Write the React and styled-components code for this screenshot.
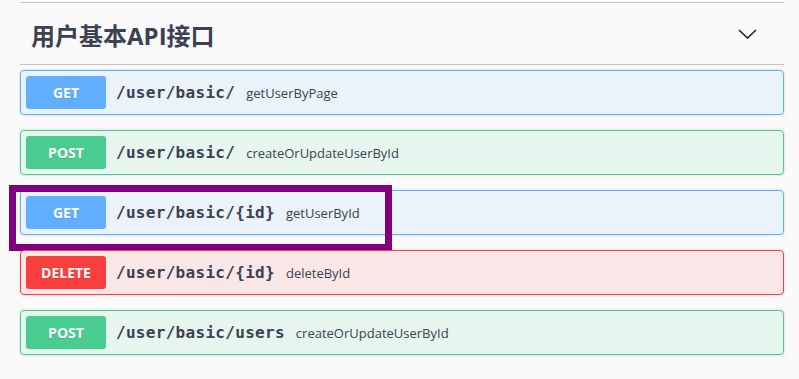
import React from 'react';
import styled, { createGlobalStyle } from 'styled-components';

// Global page styles

const GlobalStyle = createGlobalStyle`
  html, body {
    margin: 0;
    padding: 0;
    background: #fafafa;
  }
`;

const METHOD_COLORS = {
  GET: { main: '#61affe', bg: 'rgba(97, 175, 254, 0.1)' },
  POST: { main: '#49cc90', bg: 'rgba(73, 204, 144, 0.1)' },
  DELETE: { main: '#f93e3e', bg: 'rgba(249, 62, 62, 0.1)' },
};

// CSS Styled Components:

const Page = styled.div`
  padding: 2px 15px 0 20px;
`;

const Section = styled.div`
  border-top: 1px solid #c4c4c4;
`;

const TagHeader = styled.div`
  display: flex;
  align-items: center;
  justify-content: space-between;
  height: 61px;
  padding: 0 27px 0 11px;
  border-bottom: 1px solid #c4c4c4;
  margin-bottom: 5px;
`;

const TagTitle = styled.h3`
  margin: 4px 0 0 0;
  font-family: "Open Sans", "Noto Sans CJK SC", sans-serif;
  font-size: 24px;
  font-weight: 700;
  line-height: 30px;
  color: #3b4151;
`;

const Chevron = styled.svg`
  display: block;
  width: 19px;
  height: 10px;
`;

const OpBlock = styled.div`
  position: relative;
  margin-bottom: 15px;
  border: 1px solid ${(p) => METHOD_COLORS[p.method].main};
  border-radius: 4px;
  background: ${(p) => METHOD_COLORS[p.method].bg};
  box-shadow: 0 0 3px rgba(0, 0, 0, 0.19);
`;

const Summary = styled.div`
  display: flex;
  align-items: center;
  padding: 5px;
`;

const MethodBadge = styled.span`
  display: inline-block;
  box-sizing: border-box;
  min-width: 80px;
  height: 33px;
  line-height: 33px;
  text-align: center;
  border-radius: 3px;
  background: ${(p) => METHOD_COLORS[p.method].main};
  color: #fff;
  font-family: "Open Sans", sans-serif;
  font-size: 14px;
  font-weight: 700;
  text-shadow: 0 1px 0 rgba(0, 0, 0, 0.1);
`;

const Path = styled.span`
  padding: 0 10px;
  font-family: "DejaVu Sans Mono", monospace;
  font-size: 16px;
  font-weight: 600;
  letter-spacing: 0.3px;
  color: #3b4151;
`;

const Description = styled.span`
  margin-left: 1px;
  font-family: "Open Sans", sans-serif;
  font-size: 13px;
  color: #3b4151;
`;

const Highlight = styled.div`
  position: absolute;
  left: -12px;
  top: -6px;
  width: 383px;
  height: 66px;
  box-sizing: border-box;
  border: 7px solid #800080;
  pointer-events: none;
`;

const operations = [
  { method: 'GET', path: '/user/basic/', summary: 'getUserByPage' },
  { method: 'POST', path: '/user/basic/', summary: 'createOrUpdateUserById' },
  { method: 'GET', path: '/user/basic/{id}', summary: 'getUserById', highlight: true },
  { method: 'DELETE', path: '/user/basic/{id}', summary: 'deleteById' },
  { method: 'POST', path: '/user/basic/users', summary: 'createOrUpdateUserById' },
];

// React Component:

const App = () => (
  <Page>
    <GlobalStyle />
    <Section>
      <TagHeader>
        <TagTitle>用户基本API接口</TagTitle>
        <Chevron viewBox="0 0 19 10">
          <polyline points="1,1 9.5,9 18,1" fill="none" stroke="#222" strokeWidth="1.6" />
        </Chevron>
      </TagHeader>
      {operations.map((op, i) => (
        <OpBlock key={i} method={op.method}>
          <Summary>
            <MethodBadge method={op.method}>{op.method}</MethodBadge>
            <Path>{op.path}</Path>
            <Description>{op.summary}</Description>
          </Summary>
          {op.highlight ? <Highlight /> : null}
        </OpBlock>
      ))}
    </Section>
  </Page>
);

export default App;
